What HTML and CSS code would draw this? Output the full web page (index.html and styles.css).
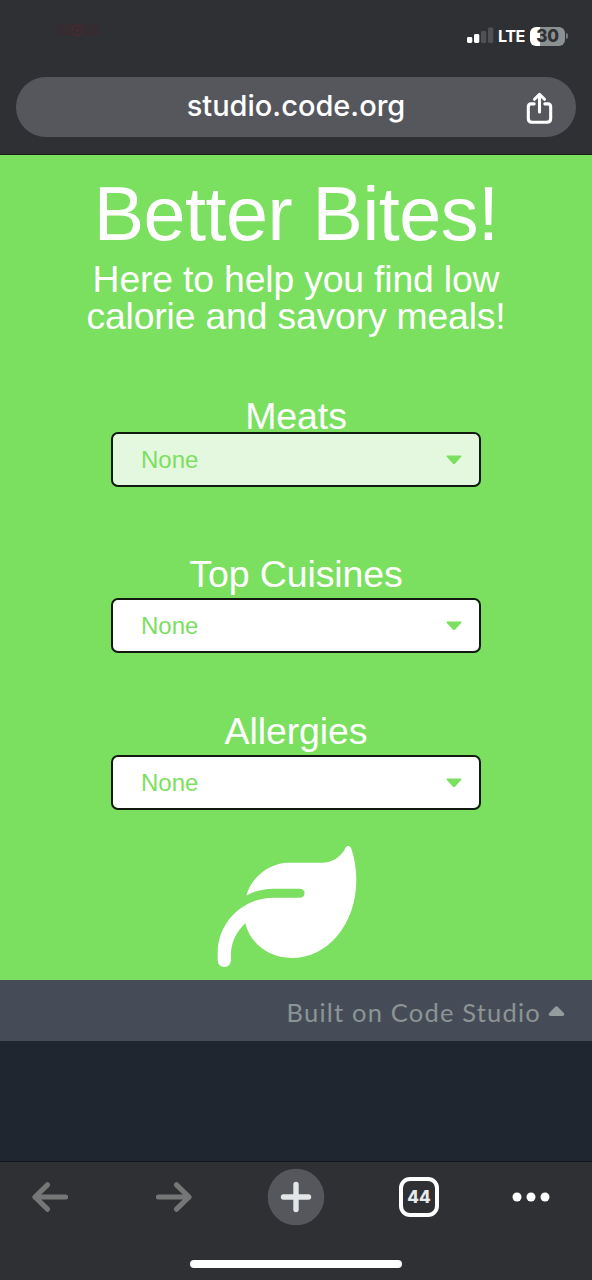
FILE: index.html
```
<!DOCTYPE html>
<html lang="en">
<head>
<meta charset="utf-8">
<title>Better Bites!</title>
<link rel="stylesheet" href="styles.css">
</head>
<body>
<header class="browser-top">
  <div class="status">
    <svg class="recording" width="48" height="20" viewBox="0 0 48 20"><rect x="1" y="4" width="45" height="12" rx="4" fill="#342c30"/><circle cx="23" cy="10.500" r="5" fill="none" stroke="#472b30" stroke-width="1.5"/><circle cx="23" cy="10.500" r="1.500" fill="#472b30"/></svg>
    <div class="status-right">
      <svg width="27" height="17" viewBox="0 0 27 17"><rect x="0" y="10" width="5.3" height="6" rx="1.4" fill="#fff"/><rect x="7" y="7" width="5.3" height="9" rx="1.4" fill="#fff"/><rect x="14" y="4" width="5.3" height="12" rx="1.4" fill="#505155"/><rect x="21" y="0.500" width="5.300" height="15.500" rx="1.400" fill="#505155"/></svg>
      <span class="lte">LTE</span>
      <div class="battery"><span>30</span></div>
      <i class="battery-tip"></i>
    </div>
  </div>
  <div class="address">
    <span class="url">studio.code.org</span>
    <svg class="share" width="27" height="33" viewBox="0 0 28 34" fill="none" stroke="#fff" stroke-width="3.200" stroke-linecap="round" stroke-linejoin="round"><path d="M8.500 12.200H5.500Q2.400 12.200 2.400 15.300V27.300Q2.400 31.300 6.400 31.300H21.600Q25.600 31.300 25.600 27.300V15.300Q25.600 12.200 22.500 12.200H19.500M14 20.500V2.700M8.800 7.400L14 2.300L19.200 7.400"/></svg>
  </div>
</header>
<main class="app">
  <h1 class="title">Better Bites!</h1>
  <p class="subtitle">Here to help you find low calorie and savory meals!</p>
  <div class="field field-meats">
    <label class="label">Meats</label>
    <div class="select select-pressed"><span>None</span><svg width="16" height="10" viewBox="0 0 16 10"><path d="M1.300.4H14.700Q16.100.5 15.100 1.900L9.200 8.400Q8 9.500 6.800 8.400L.900 1.900Q-.100.5 1.300.4Z"/></svg></div>
  </div>
  <div class="field field-cuisines">
    <label class="label">Top Cuisines</label>
    <div class="select"><span>None</span><svg width="16" height="10" viewBox="0 0 16 10"><path d="M1.300.4H14.700Q16.100.5 15.100 1.900L9.200 8.400Q8 9.500 6.800 8.400L.900 1.900Q-.100.5 1.300.4Z"/></svg></div>
  </div>
  <div class="field field-allergies">
    <label class="label">Allergies</label>
    <div class="select"><span>None</span><svg width="16" height="10" viewBox="0 0 16 10"><path d="M1.300.4H14.700Q16.100.5 15.100 1.900L9.200 8.400Q8 9.500 6.800 8.400L.900 1.900Q-.100.5 1.300.4Z"/></svg></div>
  </div>
  <svg class="leaf" width="140" height="124" viewBox="50 43 420 372" fill="#fff"><path d="M138 198C151 147 203 99 266 99H365C395 99 420 83 436 54Q444 42 452 54C462 82 468 115 468 150C468 285 381 385 274 385C205 385 149 341 135 281C108 307 92 338 92 375V391Q91 411 72 412Q53 411 52 391V368C53 277 128 204 219 204H300C317 203 317 178 300 177H218C188 177 160 185 138 198Z"/></svg>
</main>
<footer class="built"><span>Built on Code Studio</span><svg width="17" height="11" viewBox="0 0 17 11"><path d="M7.300.8Q8.500-.3 9.700.8L16 7.300Q17 10 14.500 10H2.500Q0 10 1 7.300Z" fill="#949c9e"/></svg></footer>
<div class="blank"></div>
<nav class="toolbar">
  <div class="buttons">
    <svg width="38" height="32" viewBox="0 0 38 32" fill="none" stroke="#747776" stroke-width="5.200" stroke-linecap="round" stroke-linejoin="round"><path d="M34.500 16H4M16.500 3.800L4 16L16.500 28.200"/></svg>
    <svg width="38" height="32" viewBox="0 0 38 32" fill="none" stroke="#747776" stroke-width="5.200" stroke-linecap="round" stroke-linejoin="round"><path d="M3.500 16H34M21.500 3.800L34 16L21.500 28.200"/></svg>
    <svg width="58" height="58" viewBox="0 0 58 58"><circle cx="29" cy="29" r="28.300" fill="#55575d"/><path d="M29 16.500V41.500M16.500 29H41.500" stroke="#e2e6e6" stroke-width="5.400" stroke-linecap="round"/></svg>
    <div class="tabs">44</div>
    <svg width="38" height="10" viewBox="0 0 38 10" fill="#fff"><circle cx="5" cy="5" r="4.500"/><circle cx="19" cy="5" r="4.500"/><circle cx="33" cy="5" r="4.500"/></svg>
  </div>
  <div class="home-bar"></div>
</nav>
</body>
</html>
```
FILE: styles.css
```
* { box-sizing: border-box; }
svg { display: block; flex: none; }
body { margin: 0; width: 592px; height: 1280px; overflow: hidden; background: #1f2630; font-family: "Liberation Sans", Arial, sans-serif; }

.browser-top { height: 155px; background: #2f3034; border-bottom: 1px solid #172015; }
.status { height: 77px; display: flex; justify-content: space-between; padding: 0 24px 0 54px; }
.recording { margin-top: 20px; }
.status-right { display: flex; align-items: center; height: 20px; margin-top: 26px; }
.status-right svg { margin-top: -1px; }
.lte { margin-left: 4px; width: 28px; font: 700 16.2px/20px Inter, sans-serif; letter-spacing: -.5px; color: #fff; }
.battery { width: 35px; height: 19px; margin-left: 4px; border-radius: 6px; background: linear-gradient(to right, #fff 10px, #8b9091 10px); text-align: center; font: 800 17px/19px Inter, sans-serif; letter-spacing: -.2px; color: #2f3034; }
.battery-tip { width: 2px; height: 6px; margin-left: 1px; border-radius: 0 2px 2px 0; background: #74777a; }
.address { height: 60px; margin: 0 16px; padding: 0 23px; border-radius: 30px; background: #55575d; display: grid; grid-template-columns: 27px 1fr 27px; align-items: center; }
.url { grid-column: 2; text-align: center; font: 500 29px/58px Inter, sans-serif; color: #fff; margin-bottom: 2px; }
.share { margin-top: 3px; }

.app { height: 825px; background: #7bdf60; color: #fff; padding-top: 21px; display: flex; flex-direction: column; align-items: center; }
.title { margin: 0; font-weight: 400; font-size: 75.5px; line-height: 76px; letter-spacing: -.5px; white-space: nowrap; }
.subtitle { margin: 9px 0 0; width: 470px; font-size: 37.3px; line-height: 37px; letter-spacing: -.15px; text-align: center; }
.field { width: 370px; display: flex; flex-direction: column; align-items: center; }
.field-meats { margin-top: 62px; }
.field-cuisines { margin-top: 68px; }
.field-allergies { margin-top: 59px; }
.label { height: 43px; font-size: 37.5px; line-height: 38px; letter-spacing: -.1px; white-space: nowrap; }
.field-meats .label { height: 35px; }
.select { width: 370px; height: 55px; border: 2px solid #101a0e; border-radius: 7px; background: #fff; color: #7bdf60; display: flex; align-items: center; justify-content: space-between; padding: 0 17px 0 28px; font-size: 24px; }
.select svg { fill: #7bdf60; }
.select-pressed { background: #e4f8df; }
.leaf { margin: 34px 19px 0 0; }

.built { height: 61px; padding: 2px 27px 0 0; background: #464c57; color: #8c9496; display: flex; align-items: center; justify-content: flex-end; gap: 7px; font: 400 25.5px/40px Lato, sans-serif; letter-spacing: 1.2px; }
.built svg { margin-top: -1px; }
.blank { height: 120px; background: #1f2630; }
.toolbar { height: 119px; background: #2f3034; border-top: 1px solid #15171b; }
.buttons { height: 70px; display: grid; grid-template-columns: 100px 148px 96px 150px 74px; align-items: center; justify-items: center; }
.tabs { width: 40px; height: 40px; border: 4px solid #fff; border-radius: 11px; text-align: center; font: 800 17px/32px Inter, sans-serif; color: #e8eaea; }
.home-bar { width: 212px; height: 8px; margin: 28px auto 0; border-radius: 4px; background: #fff; }
```
